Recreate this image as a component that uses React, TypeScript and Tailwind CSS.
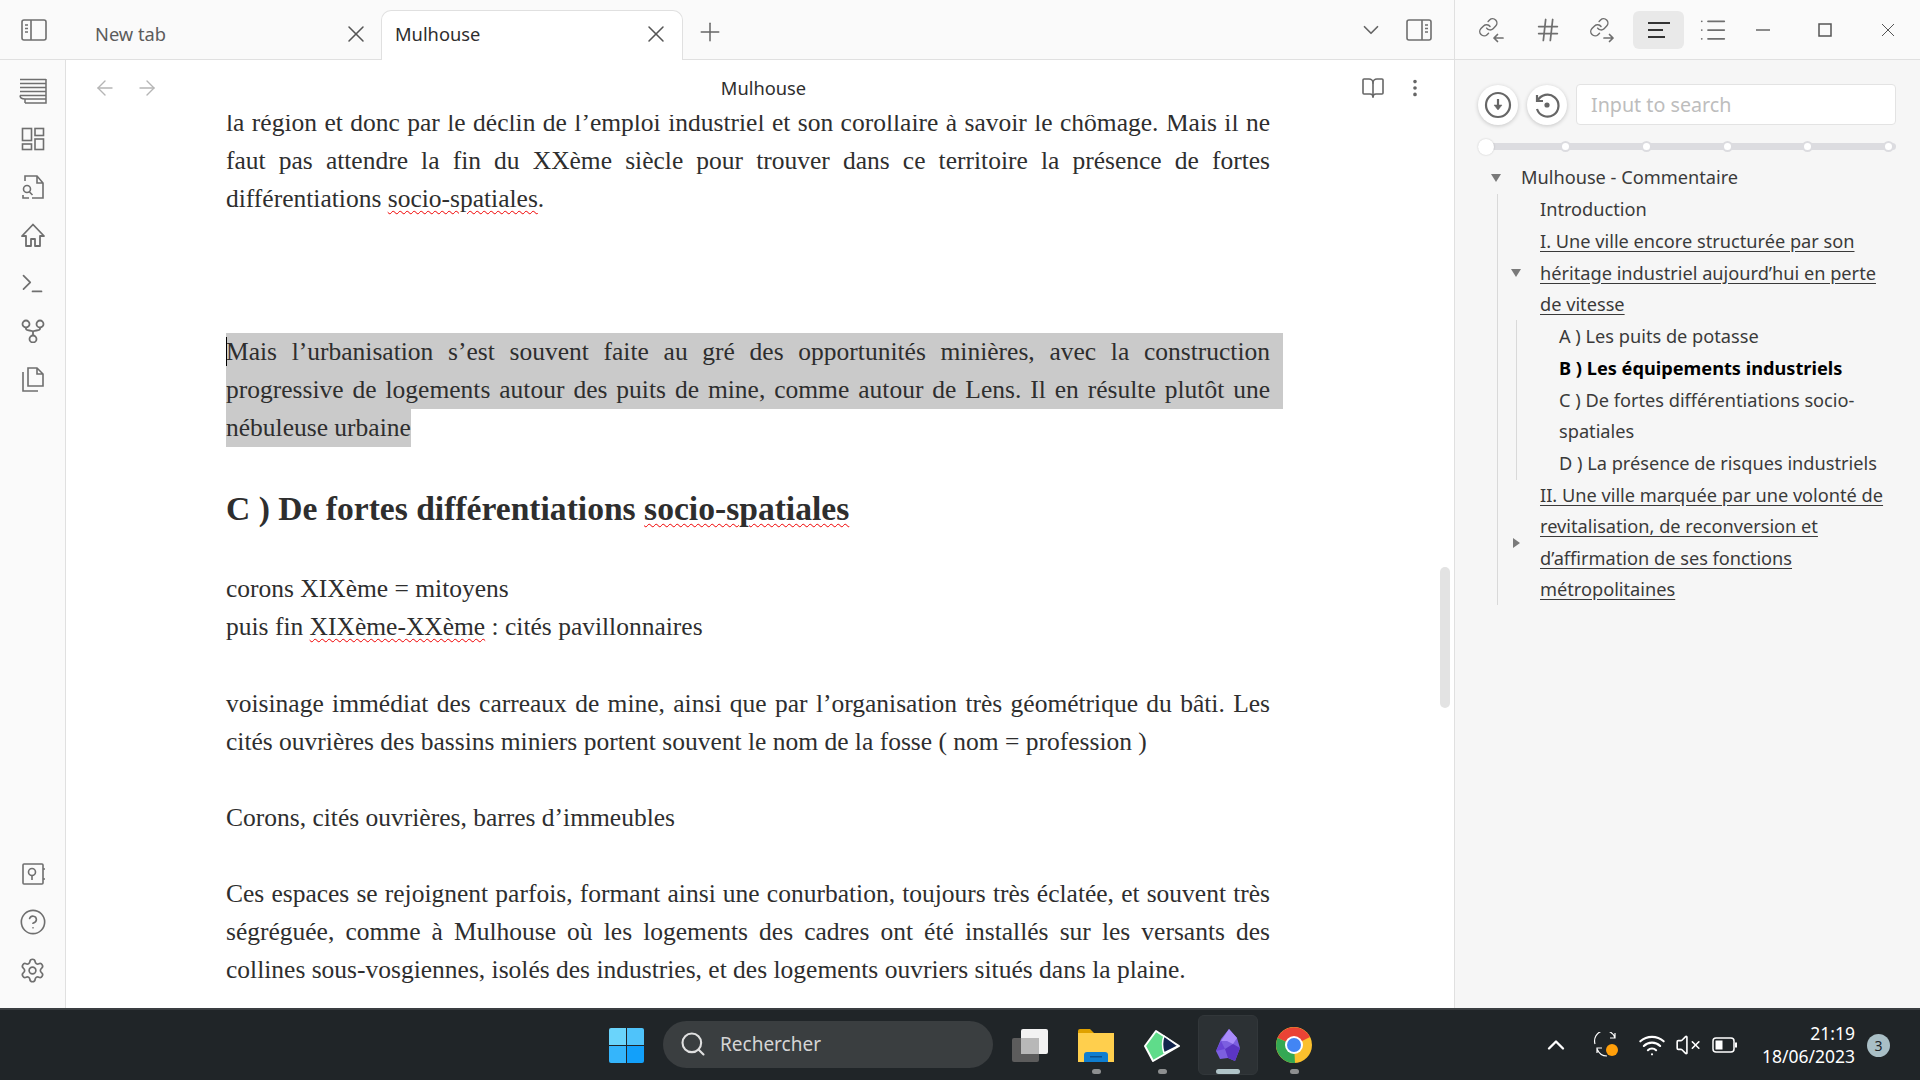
import { ArrowLeft, ArrowRight, BookOpen, ChevronDown, ChevronUp, CircleHelp, EllipsisVertical, Hash, List, Plus, Search, Settings, Terminal, VolumeX, Wifi, X } from "lucide-react";
import type { ReactNode } from "react";

const UI_FONT = "font-['Noto_Sans',sans-serif]";

function Squiggle({ children }: { children: ReactNode }) {
  return <span className="underline decoration-[#f00000] decoration-wavy decoration-1 underline-offset-[3px]">{children}</span>;
}

function Line({ children, last }: { children: ReactNode; last?: boolean }) {
  return <div className={last ? "h-[38.2px] whitespace-nowrap" : "h-[38.2px] whitespace-nowrap text-justify [text-align-last:justify]"}>{children}</div>;
}

function PanelIcon({ side }: { side: "left" | "right" }) {
  return (
    <svg width="26" height="22" viewBox="0 0 26 22" fill="none" stroke="#6f6f6f" strokeWidth="1.6">
      <rect x="1" y="1" width="24" height="20" rx="2" />
      {side === "left" ? <path d="M10 1v20M4 6h3M4 9.500h3M4 13h3" /> : <path d="M16 1v20M19 6h3M19 9.500h3M19 13h3" />}
    </svg>
  );
}

function LinkArrow({ dir }: { dir: "in" | "out" }) {
  return (
    <svg width="26" height="26" viewBox="0 0 26 26" fill="none" stroke="#6f6f6f" strokeWidth="1.7" strokeLinecap="round" strokeLinejoin="round">
      <g transform="translate(0 0) scale(0.86)">
        <path d="M10 13a5 5 0 0 0 7.540.540l3-3a5 5 0 0 0-7.070-7.070l-1.720 1.710" />
        <path d="M14 11a5 5 0 0 0-7.540-.540l-3 3a5 5 0 0 0 7.070 7.070l1.710-1.710" />
      </g>
      {dir === "in" ? <path d="M16 21h9M19.500 17.500 16 21l3.500 3.500" /> : <path d="M15 21h9M20.500 17.500 24 21l-3.500 3.500" />}
    </svg>
  );
}

function RibbonIcon({ children }: { children: ReactNode }) {
  return <div className="flex h-[48px] w-full items-center justify-center">{children}</div>;
}

function Tab({ label, active }: { label: string; active?: boolean }) {
  return (
    <div className={active ? "relative z-10 -mb-px flex h-[50px] w-[302px] items-center justify-between rounded-t-[10px] border border-b-0 border-[#e0e0e0] bg-white pb-[3px] pl-[13px] pr-[12px]" : "flex h-[50px] w-[315px] items-center justify-between pb-[1px] pl-[29px] pr-[11px]"}>
      <span className={active ? "text-[18.3px] text-[#2e2e2e]" : "text-[18.3px] text-[#5c5c5c]"}>{label}</span>
      <X size={28} strokeWidth={1.3} className="text-[#555]" />
    </div>
  );
}

function TreeRow({ level, caret, children, className }: { level: 1 | 2 | 3; caret?: "down" | "right"; children: ReactNode; className?: string }) {
  const pad = level === 1 ? "pl-[66px]" : level === 2 ? "pl-[85px]" : "pl-[104px]";
  return (
    <div className={`relative py-[0.35px] ${pad} ${className ?? ""}`}>
      {caret && (
        <svg width="12" height="10" viewBox="0 0 12 10" className={level === 1 ? "absolute left-[35px] top-1/2 -translate-y-1/2" : "absolute left-[55px] top-1/2 -translate-y-1/2"} fill="#7a7a7a">
          {caret === "down" ? <path d="M1 1h10L6 9z" /> : <path d="M3 0l7 5-7 5z" />}
        </svg>
      )}
      {children}
    </div>
  );
}

function Dot() {
  return <span className="h-[11px] w-[11px] rounded-full border-2 border-[#dcdce0] bg-white" />;
}

function Underlined({ children }: { children: ReactNode }) {
  return <span className="underline underline-offset-[3px]">{children}</span>;
}

function TaskCell({ children, mark }: { children: ReactNode; mark?: "dot" | "active" }) {
  return (
    <div className={mark === "active" ? "relative flex h-[60px] w-[60px] mx-[3px] items-center justify-center rounded-[6px] border border-[#32373a] bg-[#2c3134]" : "relative flex h-[60px] w-[66px] items-center justify-center"}>
      {children}
      {mark === "dot" && <span className="absolute bottom-[1px] h-[5px] w-[9px] rounded-full bg-[#8d8f90]" />}
      {mark === "active" && <span className="absolute bottom-[0px] h-[5px] w-[24px] rounded-full bg-[#b0c4c8]" />}
    </div>
  );
}

export default function App() {
  return (
    <div className={`flex h-[1080px] w-[1920px] flex-col overflow-hidden bg-white ${UI_FONT}`}>
      <div className="flex min-h-0 flex-1">
        {/* main column */}
        <div className="flex min-w-0 flex-1 flex-col">
          <div className="flex h-[60px] shrink-0 items-end border-b border-[#e0e0e0] bg-[#fafafa]">
            <div className="flex h-[59px] w-[66px] shrink-0 items-center justify-center pl-[2px] pt-[1px]">
              <PanelIcon side="left" />
            </div>
            <Tab label="New tab" />
            <Tab label="Mulhouse" active />
            <div className="flex h-[50px] items-center pb-[5px] pl-[12px]">
              <Plus size={30} strokeWidth={1.2} className="text-[#666]" />
            </div>
            <div className="ml-auto flex h-[59px] items-center gap-[22px] pr-[22px]">
              <ChevronDown size={26} strokeWidth={1.6} className="text-[#666]" />
              <PanelIcon side="right" />
            </div>
          </div>
          <div className="flex min-h-0 flex-1">
            <div className="flex w-[66px] shrink-0 flex-col border-r border-[#e0e0e0] bg-[#fafafa] pb-[14px] pt-[7px]">
              <RibbonIcon>
                <svg width="28" height="26" viewBox="0 0 28 26" fill="none" stroke="#6f6f6f" strokeWidth="1.5">
                  <path d="M1 1.500h26M1 5.500h26M1 9.500h26M1 13.500h26M1 17.500h26M6 21h21M6 25h21V1M1 17.500c0 2 1 3.500 5 3.500v4" />
                </svg>
              </RibbonIcon>
              <RibbonIcon>
                <svg width="24" height="24" viewBox="0 0 24 24" fill="none" stroke="#6f6f6f" strokeWidth="1.6">
                  <rect x="1.500" y="1.500" width="9" height="12" />
                  <rect x="14" y="1.500" width="8.500" height="7" />
                  <rect x="1.500" y="17" width="9" height="5.500" />
                  <rect x="14" y="12" width="8.500" height="10.500" />
                </svg>
              </RibbonIcon>
              <RibbonIcon>
                <svg width="24" height="26" viewBox="0 0 24 26" fill="none" stroke="#6f6f6f" strokeWidth="1.6">
                  <path d="M4 7V2h12l6 7v15H11M16 2v7h6" />
                  <circle cx="6" cy="15" r="3.500" />
                  <path d="M8.500 18l3 3M2 21v3h6" />
                </svg>
              </RibbonIcon>
              <RibbonIcon>
                <svg width="26" height="25" viewBox="0 0 26 25" fill="none" stroke="#6f6f6f" strokeWidth="1.8" strokeLinejoin="round">
                  <path d="M13 1.500 2 13h4v10h5v-7h4v7h5V13h4z" />
                </svg>
              </RibbonIcon>
              <RibbonIcon>
                <Terminal size={27} strokeWidth={1.5} className="text-[#6f6f6f]" />
              </RibbonIcon>
              <RibbonIcon>
                <svg width="24" height="24" viewBox="0 0 24 24" fill="none" stroke="#6f6f6f" strokeWidth="1.8">
                  <circle cx="5" cy="5" r="3.500" />
                  <circle cx="19" cy="5" r="3.500" />
                  <circle cx="12" cy="20" r="3.500" />
                  <path d="M5 8.500v1.500c0 2 7 1 7 3v3.500M19 8.500v1.500c0 2-7 1-7 3" />
                </svg>
              </RibbonIcon>
              <RibbonIcon>
                <svg width="24" height="26" viewBox="0 0 24 26" fill="none" stroke="#6f6f6f" strokeWidth="1.6">
                  <path d="M7 20V2h9l6 6v12zM16 2v6h6M2 6v19h15" />
                </svg>
              </RibbonIcon>
              <div className="mt-auto flex flex-col">
                <RibbonIcon>
                  <svg width="24" height="24" viewBox="0 0 24 24" fill="none" stroke="#6f6f6f" strokeWidth="1.6">
                    <rect x="2" y="2" width="20" height="20" rx="1" />
                    <circle cx="11" cy="10" r="3.500" />
                    <path d="M11 14v4M22 7h2M22 17h2" />
                  </svg>
                </RibbonIcon>
                <RibbonIcon>
                  <CircleHelp size={28} strokeWidth={1.4} className="text-[#6f6f6f]" />
                </RibbonIcon>
                <RibbonIcon>
                  <Settings size={27} strokeWidth={1.5} className="text-[#6f6f6f]" />
                </RibbonIcon>
              </div>
            </div>
            <div className="relative flex min-w-0 flex-1 flex-col">
              <div className="flex h-[55px] shrink-0 items-center pl-[27px] pr-[28px]">
                <div className="flex gap-[18px] text-[#b5b5b5]">
                  <ArrowLeft size={24} strokeWidth={1.4} />
                  <ArrowRight size={24} strokeWidth={1.4} />
                </div>
                <span className="flex-1 pl-[7px] text-center text-[18.3px] text-[#2e2e2e]">Mulhouse</span>
                <div className="flex items-center gap-[19px] text-[#666]">
                  <BookOpen size={24} strokeWidth={1.6} />
                  <EllipsisVertical size={22} strokeWidth={2} />
                </div>
              </div>
              <div className="min-h-0 flex-1 overflow-hidden pl-[160px] pr-[184px] font-['Liberation_Serif',serif] text-[25.5px] leading-[38.2px] text-[#2e2e2e]">
                <div className="-mt-[11px]">
                  <Line>la région et donc par le déclin de l’emploi industriel et son corollaire à savoir le chômage. Mais il ne</Line>
                  <Line>faut pas attendre la fin du XXème siècle pour trouver dans ce territoire la présence de fortes</Line>
                  <Line last>différentiations <Squiggle>socio-spatiales</Squiggle>.</Line>
                  <div className="h-[114px]" />
                  <div className="relative -mr-[13px] bg-[#cacaca] pr-[13px]">
                    <span className="absolute left-0 top-[4px] h-[29px] w-px bg-black" />
                    <Line>Mais l’urbanisation s’est souvent faite au gré des opportunités minières, avec la construction</Line>
                    <Line>progressive de logements autour des puits de mine, comme autour de Lens. Il en résulte plutôt une</Line>
                  </div>
                  <Line last><span className="inline-block bg-[#cacaca]">nébuleuse urbaine</span></Line>
                  <h2 className="mb-[42px] mt-[43px] text-[33.6px] font-bold leading-[38px] text-[#2e2e2e]">C ) De fortes différentiations <Squiggle>socio-spatiales</Squiggle></h2>
                  <Line last>corons XIXème = mitoyens</Line>
                  <Line last>puis fin <Squiggle>XIXème-XXème</Squiggle> : cités pavillonnaires</Line>
                  <div className="h-[38px]" />
                  <Line>voisinage immédiat des carreaux de mine, ainsi que par l’organisation très géométrique du bâti. Les</Line>
                  <Line last>cités ouvrières des bassins miniers portent souvent le nom de la fosse ( nom = profession )</Line>
                  <div className="h-[38px]" />
                  <Line last>Corons, cités ouvrières, barres d’immeubles</Line>
                  <div className="h-[38px]" />
                  <Line>Ces espaces se rejoignent parfois, formant ainsi une conurbation, toujours très éclatée, et souvent très</Line>
                  <Line>ségréguée, comme à Mulhouse où les logements des cadres ont été installés sur les versants des</Line>
                  <Line last>collines sous-vosgiennes, isolés des industries, et des logements ouvriers situés dans la plaine.</Line>
                </div>
              </div>
              <div className="absolute right-[4px] top-[507px] h-[141px] w-[10px] rounded-[5px] bg-[#e3e3e3]" />
            </div>
          </div>
        </div>
        {/* right sidebar */}
        <div className="flex w-[466px] shrink-0 flex-col border-l border-[#e0e0e0] bg-[#f6f6f6]">
          <div className="flex h-[60px] shrink-0 items-center border-b border-[#e0e0e0] bg-[#fafafa] pl-[23px] text-[#6f6f6f]">
            <LinkArrow dir="in" />
            <div className="ml-[30px]"><Hash size={28} strokeWidth={1.5} /></div>
            <div className="ml-[27px]"><LinkArrow dir="out" /></div>
            <div className="ml-[18px] flex h-[38px] w-[51px] items-center justify-center rounded-[6px] bg-[#e9e9e9]">
              <svg width="24" height="18" viewBox="0 0 24 18" stroke="#333" strokeWidth="2">
                <path d="M1 2h22M1 9h15M1 16h17" />
              </svg>
            </div>
            <div className="ml-[14px]"><List size={30} strokeWidth={1.4} /></div>
            <svg className="ml-[28px]" width="14" height="14" viewBox="0 0 14 14" stroke="#666" strokeWidth="1.500"><path d="M0 7h14" /></svg>
            <svg className="ml-[48px]" width="14" height="14" viewBox="0 0 14 14" fill="none" stroke="#555" strokeWidth="1.500"><rect x="1" y="1" width="12" height="12" /></svg>
            <svg className="ml-[49px]" width="14" height="14" viewBox="0 0 14 14" stroke="#555" strokeWidth="1"><path d="M1 1l12 12M13 1 1 13" /></svg>
          </div>
          <div className="flex flex-col pl-[23px] pr-[24px] pt-[24px]">
            <div className="flex items-center">
              <div className="flex h-[40px] w-[40px] items-center justify-center rounded-full bg-white shadow-[0_1px_4px_rgba(0,0,0,0.2)]">
                <svg width="28" height="28" viewBox="0 0 28 28" fill="none" stroke="#666" strokeWidth="2.200">
                  <circle cx="14" cy="14" r="12" />
                  <path d="M14 8v10" />
                  <path d="M10 14h8l-4 5z" fill="#666" strokeWidth="0.500" />
                </svg>
              </div>
              <div className="ml-[9px] flex h-[40px] w-[40px] items-center justify-center rounded-full bg-white shadow-[0_1px_4px_rgba(0,0,0,0.2)]">
                <svg width="28" height="28" viewBox="0 0 28 28" fill="none" stroke="#666" strokeWidth="2.200">
                  <path d="M4 4v6h6M4.500 10A11 11 0 1 1 4 18" />
                  <circle cx="14" cy="14" r="1.500" fill="#666" />
                </svg>
              </div>
              <div className="ml-[9px] flex h-[41px] flex-1 items-center rounded-[4px] border border-[#e3e3e3] bg-white pl-[14px] text-[19.7px] text-[#bdbdbd]">
                Input to search
              </div>
            </div>
            <div className="relative mt-[18px] flex h-[7px] items-center justify-between rounded-full bg-[#dcdce0] pl-[82px] pr-[2px]">
              <span className="absolute left-0 top-1/2 h-[16px] w-[16px] -translate-y-1/2 rounded-full bg-white shadow-[0_0_2px_rgba(0,0,0,0.2)]" />
              <Dot /><Dot /><Dot /><Dot /><Dot />
            </div>
          </div>
          <div className="relative mt-[12px] pr-[24px] text-[18.2px] leading-[31.3px] text-[#3a3a3a]">
            <div className="absolute bottom-[1px] left-[42px] top-[32px] w-px bg-[#d9d9d9]" />
            <div className="absolute left-[61px] top-[158px] h-[160px] w-px bg-[#d9d9d9]" />
            <TreeRow level={1} caret="down">Mulhouse - Commentaire</TreeRow>
            <TreeRow level={2}>Introduction</TreeRow>
            <TreeRow level={2} caret="down"><Underlined>I. Une ville encore structurée par son héritage industriel aujourd’hui en perte de vitesse</Underlined></TreeRow>
            <TreeRow level={3}>A ) Les puits de potasse</TreeRow>
            <TreeRow level={3} className="font-bold text-black">B ) Les équipements industriels</TreeRow>
            <TreeRow level={3}>C ) De fortes différentiations socio-spatiales</TreeRow>
            <TreeRow level={3}>D ) La présence de risques industriels</TreeRow>
            <TreeRow level={2} caret="right"><Underlined>II. Une ville marquée par une volonté de revitalisation, de reconversion et d’affirmation de ses fonctions métropolitaines</Underlined></TreeRow>
          </div>
        </div>
      </div>
      {/* taskbar */}
      <div className="flex h-[72px] shrink-0 items-center border-t-2 border-[#3a3e41] bg-[#202528] text-white">
        <div className="ml-[609px] grid h-[35px] w-[35px] grid-cols-2 gap-[1px]">
          <span className="rounded-tl-[2px] bg-[#6ad4fb]" />
          <span className="rounded-tr-[2px] bg-[#4fc3fa]" />
          <span className="rounded-bl-[2px] bg-[#35b5fb]" />
          <span className="rounded-br-[2px] bg-[#12a0fa]" />
        </div>
        <div className="mb-[2px] ml-[19px] flex h-[47px] w-[330px] items-center rounded-full bg-[#3a3e40] pl-[16px] text-[19px] text-[#d5d5d5]">
          <Search size={28} strokeWidth={1.8} className="text-[#e0e0e0]" />
          <span className="ml-[13px]">Rechercher</span>
        </div>
        <div className="ml-[4px] flex items-center">
          <TaskCell>
            <svg width="36" height="33" viewBox="0 0 36 33">
              <rect x="0" y="9" width="27" height="24" rx="2" fill="#5c5c5c" />
              <rect x="9" y="0" width="27" height="25" rx="2" fill="#f2f2f2" />
              <rect x="9" y="9" width="18" height="16" fill="#b8b8b8" />
            </svg>
          </TaskCell>
          <TaskCell mark="dot">
            <svg width="36" height="33" viewBox="0 0 36 33">
              <path d="M0 33V2q0-2 2-2h10l4 4h20v29z" fill="#e0a100" />
              <rect x="0" y="4" width="36" height="29" fill="#ffcf4d" />
              <path d="M6 33V26q0-3 3-3h18q3 0 3 3v7z" fill="#0f7ed0" />
              <rect x="12" y="27" width="12" height="1.500" fill="#0a4f8a" />
            </svg>
          </TaskCell>
          <TaskCell mark="dot">
            <svg width="36" height="33" viewBox="0 0 36 33">
              <path d="M1 17 12 2l23 15L9 32z" fill="#5fdc8a" stroke="#fff" strokeWidth="2" strokeLinejoin="round" />
              <path d="M20 7 34 17l-14 7q-3-9 0-17z" fill="#12244d" stroke="#fff" strokeWidth="1.500" strokeLinejoin="round" />
            </svg>
          </TaskCell>
          <TaskCell mark="active">
            <svg width="24" height="32" viewBox="0 0 24 32">
              <path d="M13 0 21 9l3 10-5 13-7-3-8 1-4-8 5-12z" fill="#7c5fe0" />
              <path d="M13 0 21 9l-4 6-6-3-6 0z" fill="#a98bfb" />
              <path d="M5 12 9 20 0 22z" fill="#6a45d6" />
              <path d="M9 20l8-5 7 4-5 13-7-3z" fill="#5b35c4" />
            </svg>
          </TaskCell>
          <TaskCell mark="dot">
            <svg width="36" height="36" viewBox="0 0 36 36">
              <circle cx="18" cy="18" r="18" fill="#fbc02d" />
              <path d="M18 18 1.500 11A18 18 0 0 1 34 10z" fill="#ea4335" />
              <path d="M18 18 1.500 11A18 18 0 0 0 19 36z" fill="#34a853" />
              <circle cx="18" cy="18" r="9" fill="#fff" />
              <circle cx="18" cy="18" r="7" fill="#4285f4" />
            </svg>
          </TaskCell>
        </div>
        <div className="ml-[215px] flex items-center">
          <ChevronUp size={28} strokeWidth={2} className="text-white" />
          <svg className="ml-[23px]" width="26" height="26" viewBox="0 0 26 26" fill="none" stroke="#fff" strokeWidth="1.200">
            <path d="M2 12A10 10 0 0 1 22 6M22 1v5h-5M4 21v-5h5M4 17q3 7 10 7" />
            <circle cx="19" cy="18" r="6" fill="#ff9f0a" stroke="none" />
          </svg>
          <Wifi size={28} strokeWidth={1.8} className="ml-[19px] text-white" />
          <VolumeX size={26} strokeWidth={1.5} className="ml-[9px] text-white" />
          <svg className="ml-[11px]" width="26" height="18" viewBox="0 0 26 18" fill="none" stroke="#fff" strokeWidth="1.500">
            <rect x="1" y="2" width="21" height="14" rx="3" />
            <rect x="3.500" y="4.500" width="7" height="9" fill="#fff" stroke="none" />
            <rect x="23" y="6.500" width="2" height="5" fill="#fff" stroke="none" />
          </svg>
          <div className="ml-[22px] flex w-[95px] flex-col items-end text-[17.5px] leading-[23px] text-white">
            <span>21:19</span>
            <span>18/06/2023</span>
          </div>
          <span className="ml-[12px] flex h-[23px] w-[23px] items-center justify-center rounded-full bg-[#a9bfc6] text-[14px] text-[#202528]">3</span>
        </div>
      </div>
    </div>
  );
}
